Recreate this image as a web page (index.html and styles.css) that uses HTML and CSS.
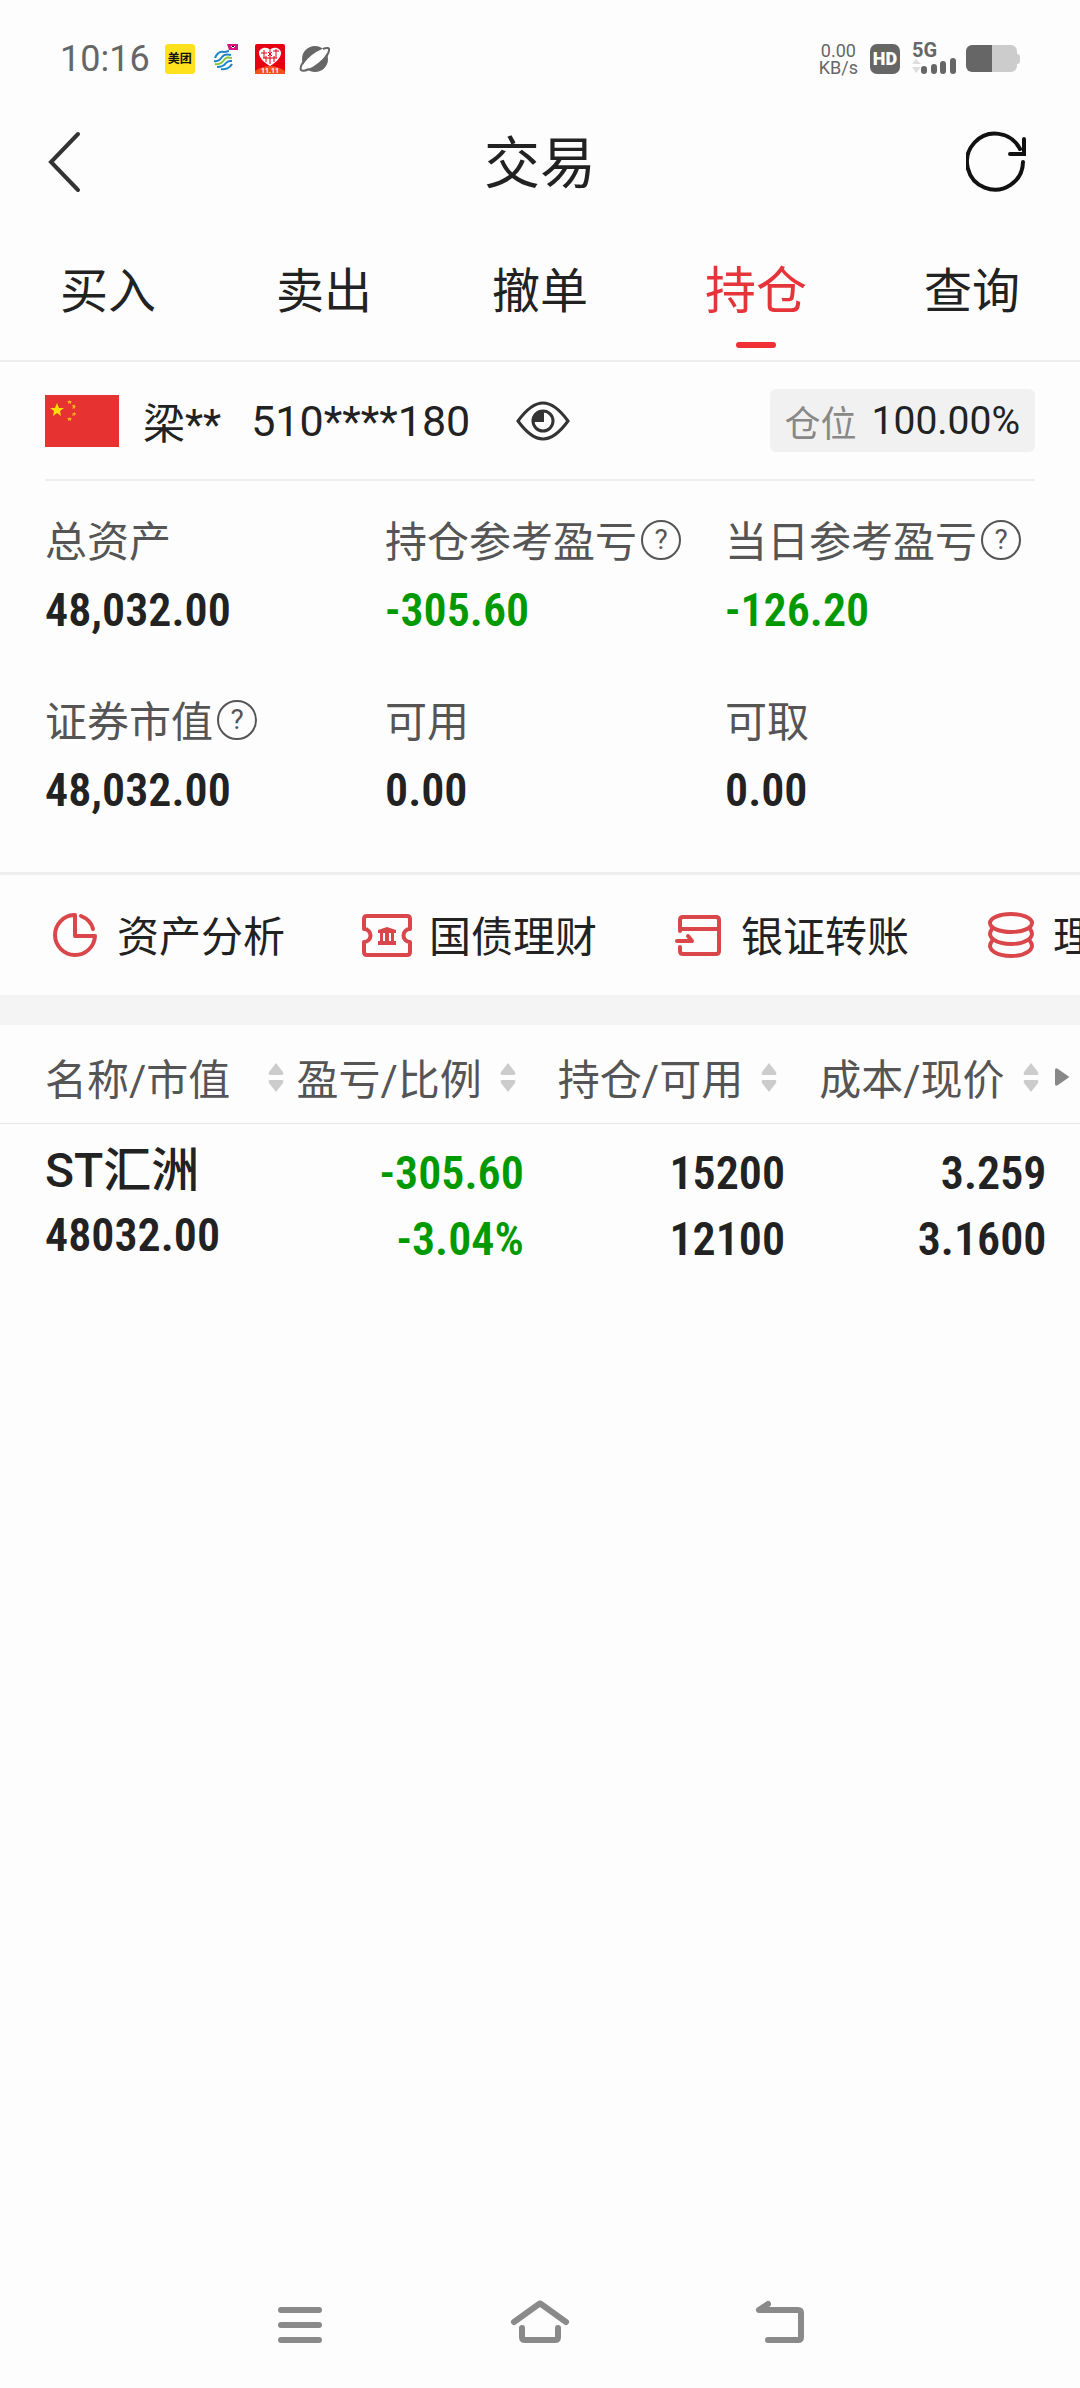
FILE: index.html
```html
<!DOCTYPE html>
<html lang="zh-CN">
<head>
<meta charset="utf-8">
<meta name="viewport" content="width=device-width, initial-scale=1">
<title>交易</title>
<link rel="stylesheet" href="styles.css">
</head>
<body>
<div class="app">
  <div class="status">
    <div class="status-group">
      <span class="clock">10:16</span>
      <span class="app-badge">美团</span>
      <svg class="app-icon" viewBox="0 0 30 30" aria-hidden="true">
        <g fill="none" stroke-width="2">
          <path stroke="#1c86c8" d="M5 14c2-5 5-7 9-6 3 0 4-1 5-1M4 17c4 1 6-1 8-4s5-3 9-2"/>
          <path stroke="#8cc43c" d="M5 20c5 1 7-1 9-4s4-3 8-2"/>
          <path stroke="#1c86c8" d="M7 23c5 0 7-1 9-4s4-2 6-2M11 25c4 1 9-1 11-5"/>
        </g>
        <path fill="#d6137f" d="M17 0h11v6H19z"/>
        <path stroke="#fff" d="M21 2l2 2 2-2"/>
      </svg>
      <svg class="app-icon" viewBox="0 0 30 30" aria-hidden="true">
        <rect width="30" height="30" rx="2" fill="#e60012"/>
        <path fill="#f4511e" d="M0 27q15-10 30 0v3H0z"/>
        <path fill="#fff" d="M15 22C8 18 4 13 4 9c0-5 8-7 11-3 3-4 11-2 11 3 0 4-4 9-11 13z"/>
        <path stroke="#e60012" fill="none" d="M6 9h6M9 6v8M13 8l4 4M17 8l-4 4M18 7h6M21 5v9M15 6v14M8 14h14M11 12v6M19 12v6"/>
        <text x="15" y="29" class="badge-text">11.11</text>
      </svg>
      <svg class="app-icon" viewBox="0 0 30 30" aria-hidden="true">
        <circle cx="15" cy="15" r="13" fill="#666"/>
        <ellipse cx="15" cy="15" rx="16" ry="5" transform="rotate(-39 15 15)" fill="#fdfdfd"/>
        <path fill="none" stroke="#666" stroke-width="2" d="M23 5c4-2 7-1 6 1 0 2-1 4-3 7M4 17c-3 4-4 7-3 9 1 1 4 1 8-1"/>
      </svg>
    </div>
    <div class="status-group status-system">
      <span class="speed"><span>0.00</span><span>KB/s</span></span>
      <span class="hd">HD</span>
      <span class="signal">5G
        <svg viewBox="0 0 46 18" aria-hidden="true">
          <path fill="#ddd" d="M0 7l4-5 5 5zM0 10h9l-5 6z"/>
          <path stroke="#666" stroke-width="6" stroke-linecap="round" d="M12 12v2M22 10v4M31 7v7M41 4v10"/>
        </svg>
      </span>
      <svg class="battery" viewBox="0 0 54 28" aria-hidden="true">
        <path fill="#ccc" d="M26 0h19a6 6 0 0 1 6 6v3q3 0 3 3v4q0 3-3 3v2a6 6 0 0 1-6 6H26z"/>
        <path fill="#666" d="M6 0h20v27H6a6 6 0 0 1-6-6V6a6 6 0 0 1 6-6z"/>
      </svg>
    </div>
  </div>

  <header class="title-bar">
    <button class="icon-button" type="button" aria-label="返回">
      <svg viewBox="0 0 66 66"><path class="line" stroke="#333" d="M30 5L3 33l27 28"/></svg>
    </button>
    <h1>交易</h1>
    <button class="icon-button" type="button" aria-label="刷新">
      <svg viewBox="0 0 66 66"><path class="line" stroke="#111" d="M57 33A28 28 0 1 1 54 20M58 10v15H44"/></svg>
    </button>
  </header>

  <nav class="tabs">
    <a href="#buy">买入</a>
    <a href="#sell">卖出</a>
    <a href="#cancel">撤单</a>
    <a href="#hold" class="active" aria-current="page">持仓</a>
    <a href="#query">查询</a>
  </nav>

  <section class="account">
    <svg class="flag" viewBox="0 0 74 52" aria-hidden="true">
      <rect width="74" height="52" fill="#e63331"/>
      <path fill="#ffde00" d="M12 8l2 5h5l-4 3 1 5-4-3-4 3 1-5-4-3h5z"/>
      <path fill="#ffb21a" d="M24 5l1 1h2l-1 1v2l-2-1-1 1v-2l-1-1h2zM29 9l1 2h1l-1 1v2l-1-1-2 1 1-2-1-2h2zM29 17l1 1h1l-1 2v1l-1-1-2 1 1-2-1-1h2zM24 22l1 1h2l-1 1v2l-2-1-1 1v-2l-1-1h2z"/>
    </svg>
    <span class="owner">梁**</span>
    <span class="number">510****180</span>
    <button class="eye" type="button" aria-label="显示或隐藏金额">
      <svg viewBox="0 0 54 40">
        <g fill="none" stroke="#333">
          <path stroke-width="3" d="M2 20C10 9 18 2 27 2s17 7 25 18c-8 11-16 18-25 18S10 31 2 20z"/>
          <circle cx="27" cy="20" r="10" stroke-width="3"/>
        </g>
        <path fill="#333" d="M28 9v12H16A11 11 0 0 1 28 9z"/>
      </svg>
    </button>
    <span class="position"><span class="position-label">仓位</span>100.00%</span>
  </section>

  <dl class="stats">
    <div><dt>总资产</dt><dd>48,032.00</dd></div>
    <div><dt>持仓参考盈亏<button class="help" type="button" aria-label="持仓参考盈亏说明">?</button></dt><dd class="down">-305.60</dd></div>
    <div><dt>当日参考盈亏<button class="help" type="button" aria-label="当日参考盈亏说明">?</button></dt><dd class="down">-126.20</dd></div>
    <div><dt>证券市值<button class="help" type="button" aria-label="证券市值说明">?</button></dt><dd>48,032.00</dd></div>
    <div><dt>可用</dt><dd>0.00</dd></div>
    <div><dt>可取</dt><dd>0.00</dd></div>
  </dl>

  <nav class="shortcuts">
    <a href="#analysis">
      <svg viewBox="0 0 60 60" aria-hidden="true"><path d="M29 10A20 20 0 1 0 50 31H30V10zM36 11q10 4 12 13"/></svg>资产分析</a>
    <a href="#bond">
      <svg viewBox="0 0 60 60" aria-hidden="true">
        <path d="M10 11h40q3 0 3 3v10a6 6 0 0 0 0 13v10q0 3-3 3H10q-3 0-3-3V37a6 6 0 0 0 0-13V14q0-3 3-3z"/>
        <path class="solid" d="M21 25l9-3 9 3v3h-2v8h2v4H21v-4h2v-8h-2zM26 28v8h2v-8zM32 28v8h2v-8z"/>
      </svg>国债理财</a>
    <a href="#transfer">
      <svg viewBox="0 0 60 60" aria-hidden="true"><path d="M11 26V15q0-3 3-3h33q3 0 3 3v31q0 3-3 3H14q-3 0-3-3v-4M11 24h39M8 36h15l-4-5"/></svg>银证转账</a>
    <a href="#wealth">
      <svg viewBox="0 0 60 60" aria-hidden="true">
        <ellipse cx="30" cy="18" rx="21" ry="9"/>
        <path d="M11 24c-7 9 6 15 19 15s26-6 19-15M11 36c-7 9 6 15 19 15s26-6 19-15"/>
      </svg>理财</a>
  </nav>

  <table class="holdings">
    <colgroup><col class="c-name"><col class="c-profit"><col class="c-num"><col class="c-num"><col></colgroup>
    <thead>
      <tr>
        <th><button class="sort" type="button">名称/市值<svg viewBox="0 0 16 30"><path d="M8 1l7 9q1 3-1 3H2q-2 0-1-3zM8 30l7-9q1-3-1-3H2q-2 0-1 3z"/></svg></button></th>
        <th><button class="sort" type="button">盈亏/比例<svg viewBox="0 0 16 30"><path d="M8 1l7 9q1 3-1 3H2q-2 0-1-3zM8 30l7-9q1-3-1-3H2q-2 0-1 3z"/></svg></button></th>
        <th><button class="sort" type="button">持仓/可用<svg viewBox="0 0 16 30"><path d="M8 1l7 9q1 3-1 3H2q-2 0-1-3zM8 30l7-9q1-3-1-3H2q-2 0-1 3z"/></svg></button></th>
        <th><button class="sort" type="button">成本/现价<svg viewBox="0 0 16 30"><path d="M8 1l7 9q1 3-1 3H2q-2 0-1-3zM8 30l7-9q1-3-1-3H2q-2 0-1 3z"/></svg></button></th>
        <th><button class="more" type="button" aria-label="更多列"><svg viewBox="0 0 14 18"><path d="M0 2q0-3 3-1l10 7q2 1 0 2L3 17q-3 2-3-1z"/></svg></button></th>
      </tr>
    </thead>
    <tbody>
      <tr>
        <td><span class="stock">ST汇洲</span><span class="worth">48032.00</span></td>
        <td class="down"><span>-305.60</span><span>-3.04%</span></td>
        <td><span>15200</span><span>12100</span></td>
        <td><span>3.259</span><span>3.1600</span></td>
        <td></td>
      </tr>
    </tbody>
  </table>

  <footer class="system-nav">
    <button type="button" aria-label="最近任务"><svg viewBox="0 0 60 60"><path d="M11 15h38M11 30h38M11 45h38"/></svg></button>
    <button type="button" aria-label="主页"><svg viewBox="0 0 60 60"><path d="M4 27L29 9q1-1 2 0l25 18M12 33v9q0 3 3 3h30q3 0 3-3v-9"/></svg></button>
    <button type="button" aria-label="返回上一级"><svg viewBox="0 0 60 60"><path d="M18 9L9 15h39q3 0 3 3v24q0 3-3 3H18"/></svg></button>
  </footer>
</div>
</body>
</html>
```
FILE: styles.css
```css
* { box-sizing: border-box; }

body {
  margin: 0;
  background: #fdfdfd;
  color: #222;
  font-family: Roboto, "Noto Sans CJK SC", sans-serif;
  font-size: 42px;
}

button {
  padding: 0;
  border: 0;
  background: none;
  color: inherit;
  font: inherit;
}

a { color: inherit; text-decoration: none; }
svg { display: block; flex: none; }

.app {
  display: flex;
  flex-direction: column;
  min-height: 100vh;
  overflow: hidden;
}

/* Status bar */
.status {
  display: flex;
  justify-content: space-between;
  height: 118px;
  padding: 0 60px;
  color: #666;
}
.status-group { display: flex; align-items: center; gap: 15px; }
.status-system { gap: 12px; }
.clock { font-size: 36px; }
.app-badge {
  width: 30px;
  border-radius: 3px;
  background: #ffe11e;
  color: #111;
  font-size: 12px;
  font-weight: 700;
  line-height: 30px;
  text-align: center;
}
.app-icon { width: 30px; height: 30px; overflow: visible; }
.badge-text { fill: #fff; font-size: 7px; font-weight: 700; text-anchor: middle; }
.speed { display: flex; flex-direction: column; font-size: 18px; line-height: 17px; text-align: center; }
.hd {
  width: 30px;
  border-radius: 7px;
  background: #666;
  color: #fff;
  font-size: 18px;
  font-weight: 900;
  line-height: 30px;
  text-align: center;
}
.signal { width: 42px; font-size: 20px; font-weight: 700; line-height: 14px; }
.signal svg { width: 46px; height: 18px; }
.battery { width: 54px; height: 28px; }

/* Title bar */
.title-bar {
  display: flex;
  align-items: center;
  justify-content: space-between;
  height: 88px;
  padding: 0 48px;
}
.title-bar h1 { margin: 0; padding-top: 4px; font-size: 56px; font-weight: 400; line-height: 84px; }
.icon-button svg { width: 66px; height: 66px; }
.line { fill: none; stroke-width: 4; stroke-linecap: round; }

/* Trade tabs */
.tabs {
  display: grid;
  grid-template-columns: repeat(5, 1fr);
  height: 156px;
  border-bottom: 2px solid #eee;
  font-size: 48px;
  line-height: 72px;
  text-align: center;
}
.tabs a { display: flex; flex-direction: column; align-items: center; padding-top: 50px; }
.tabs .active { color: #e6353a; font-size: 51px; }
.tabs .active::after {
  width: 40px;
  height: 6px;
  margin-top: 14px;
  border-radius: 3px;
  background: #f03035;
  content: "";
}

/* Account */
.account {
  display: flex;
  align-items: center;
  height: 119px;
  margin: 0 45px;
  border-bottom: 2px solid #eee;
}
.flag { width: 74px; height: 52px; }
.owner { margin-left: 24px; font-size: 42px; }
.number { margin-left: 30px; font-size: 43px; }
.eye { margin-left: 46px; }
.eye svg { width: 54px; height: 40px; }
.position {
  display: flex;
  align-items: center;
  gap: 15px;
  height: 63px;
  margin-left: auto;
  padding: 0 15px;
  border-radius: 6px;
  background: #f1f1f1;
  font-size: 39px;
}
.position-label { color: #888; font-size: 36px; }

/* Balances */
.stats {
  display: grid;
  grid-template-columns: repeat(3, 1fr);
  row-gap: 42px;
  margin: 0;
  padding: 27px 15px 46px 45px;
  border-bottom: 3px solid #eee;
}
.stats dt {
  display: flex;
  align-items: center;
  gap: 4px;
  height: 66px;
  padding-bottom: 6px;
  color: #555;
  white-space: nowrap;
}
.stats dd {
  margin: 0;
  font-family: "Roboto Condensed", Roboto, sans-serif;
  font-size: 46px;
  font-weight: 600;
  line-height: 72px;
}
.stats .down, .holdings .down { color: #090; }
.help {
  width: 40px;
  height: 40px;
  margin-top: 4px;
  border: 2px solid #555;
  border-radius: 50%;
  font-size: 28px;
  line-height: 36px;
}

/* Shortcuts */
.shortcuts {
  display: flex;
  gap: 72px;
  height: 150px;
  padding-left: 45px;
  border-bottom: 30px solid #f4f4f4;
  white-space: nowrap;
}
.shortcuts a { display: flex; flex: none; align-items: center; gap: 12px; padding-bottom: 4px; }
.shortcuts svg {
  width: 60px;
  height: 60px;
  margin-top: 4px;
  fill: none;
  stroke: #d9474a;
  stroke-width: 4;
  stroke-linecap: round;
  stroke-linejoin: round;
}
.shortcuts .solid { fill: #d9474a; fill-rule: evenodd; stroke: none; }

/* Holdings */
.holdings { width: 100%; border-collapse: collapse; table-layout: fixed; }
.c-name { width: 27%; }
.c-profit { width: 21.5%; }
.c-num { width: 24.2%; }
.holdings th {
  height: 98px;
  padding: 6px 8px 0 0;
  border-bottom: 1px solid #e8e8e8;
  color: #555;
  font-weight: 400;
}
.holdings th:first-child, .holdings td:first-child { padding-left: 45px; }
.sort {
  display: flex;
  align-items: center;
  justify-content: flex-end;
  gap: 18px;
  width: 100%;
  white-space: nowrap;
}
th:first-child .sort { justify-content: space-between; }
.sort svg { width: 16px; height: 30px; fill: #ccc; }
.more { display: block; margin-left: 8px; }
.more svg { width: 14px; height: 18px; fill: #888; }
.holdings td {
  padding: 16px 0;
  font-family: "Roboto Condensed", Roboto, "Noto Sans CJK SC", sans-serif;
  font-size: 46px;
  font-weight: 600;
  line-height: 66px;
  text-align: right;
  vertical-align: top;
}
.holdings td:first-child { text-align: left; }
.holdings td span { display: block; }
.holdings .stock {
  font-family: Roboto, "Noto Sans CJK SC", sans-serif;
  font-size: 48px;
  font-weight: 500;
  line-height: 62px;
}

/* System navigation */
.system-nav {
  display: grid;
  grid-template-columns: repeat(3, 1fr);
  margin-top: auto;
  padding: 0 180px 33px;
}
.system-nav button { display: flex; justify-content: center; }
.system-nav svg {
  width: 60px;
  height: 60px;
  fill: none;
  stroke: #8a8a8a;
  stroke-width: 6;
  stroke-linecap: round;
  stroke-linejoin: round;
}
```
